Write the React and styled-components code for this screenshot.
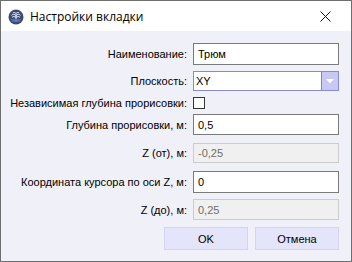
import React from 'react'
import styled, { createGlobalStyle } from 'styled-components'

const Global = createGlobalStyle`
  html, body { margin: 0; padding: 0; background: #ffffff; }
  * { box-sizing: border-box; }
`

const rows = [
  { label: 'Наименование:', kind: 'input', value: 'Трюм', h: 22 },
  { label: 'Плоскость:', kind: 'select', value: 'XY', h: 20 },
  { label: 'Независимая глубина прорисовки:', kind: 'check', h: 12 },
  { label: 'Глубина прорисовки, м:', kind: 'input', value: '0,5', h: 21 },
  { label: 'Z (от), м:', kind: 'disabled', value: '-0,25', h: 20 },
  { label: 'Координата курсора по оси Z, м:', kind: 'input', value: '0', h: 22 },
  { label: 'Z (до), м:', kind: 'disabled', value: '0,25', h: 21 },
]

function AppIcon() {
  return (
    <svg width="16" height="16" viewBox="0 0 16 16">
      <circle cx="8" cy="8" r="7.5" fill="#3b4a78" />
      <path d="M8 12.5V5.5M8 6.5C6.5 5 4.5 5 3.5 6.5M8 6.5C9.5 5 11.5 5 12.5 6.5M8 8.5C6.5 7.2 5 7.2 4 8.5M8 8.5C9.5 7.2 11 7.2 12 8.5M8 4.5C7 3.5 5.5 3.3 4.8 4M8 4.5C9 3.5 10.5 3.3 11.2 4" stroke="#ffffff" strokeWidth="0.9" fill="none" />
      <rect x="3" y="10" width="10" height="1.2" fill="#e23b3b" />
      <rect x="4" y="11.4" width="8" height="1.1" fill="#4a8ad8" />
    </svg>
  )
}

function Field({ row }) {
  if (row.kind === 'check') return <Check />
  if (row.kind === 'select') {
    return (
      <Select $h={row.h}>
        <SelectText>{row.value}</SelectText>
        <DropButton>
          <svg width="8" height="5" viewBox="0 0 8 5"><path d="M0 0H8L4 4.5Z" fill="#ffffff" /></svg>
        </DropButton>
      </Select>
    )
  }
  return (
    <TextBox $h={row.h} $disabled={row.kind === 'disabled'}>{row.value}</TextBox>
  )
}

export default function App() {
  return (
    <Window>
      <Global />
      <TitleBar>
        <AppIcon />
        <Title>Настройки вкладки</Title>
        <Close>
          <svg width="11" height="11" viewBox="0 0 11 11"><path d="M0.5 0.5L10.5 10.5M10.5 0.5L0.5 10.5" stroke="#111" strokeWidth="1" /></svg>
        </Close>
      </TitleBar>
      <Body>
        <Form>
          {rows.map((r) => (
            <React.Fragment key={r.label}>
              <Label $h={r.h}>{r.label}</Label>
              <Field row={r} />
            </React.Fragment>
          ))}
        </Form>
        <Buttons>
          <Button>OK</Button>
          <Button>Отмена</Button>
        </Buttons>
      </Body>
    </Window>
  )
}

const Window = styled.div`
  width: 352px;
  height: 262px;
  border: 1px solid #6f6f6f;
  display: flex;
  flex-direction: column;
  font-family: 'Liberation Sans', Arial, sans-serif;
  overflow: hidden;
`

const TitleBar = styled.div`
  height: 30px;
  background: #ffffff;
  display: flex;
  align-items: center;
  padding-left: 7px;
  padding-top: 1px;
`

const Title = styled.div`
  margin-left: 6px;
  font-family: 'Open Sans', 'Liberation Sans', sans-serif;
  font-size: 12px;
  color: #000;
`

const Close = styled.div`
  margin-left: auto;
  width: 46px;
  display: flex;
  justify-content: center;
  padding-right: 6px;
`

const Body = styled.div`
  flex: 1;
  background: #f0f0f8;
  padding: 12px 12px 0 7px;
`

const Form = styled.div`
  display: grid;
  grid-template-columns: 1fr 146px;
  grid-template-rows: 28px 26px 17px 29px 28px 28px 28px;
  column-gap: 6px;
`

const Label = styled.div`
  justify-self: end;
  align-self: start;
  height: ${(p) => p.$h}px;
  display: flex;
  align-items: center;
  font-size: 11px;
  color: #000;
  white-space: nowrap;
`

const TextBox = styled.div`
  height: ${(p) => p.$h}px;
  border: 1px solid ${(p) => (p.$disabled ? '#cccccc' : '#7a7a7a')};
  background: ${(p) => (p.$disabled ? '#f0f0f0' : '#ffffff')};
  color: ${(p) => (p.$disabled ? '#6d6d6d' : '#000000')};
  font-size: 11px;
  display: flex;
  align-items: center;
  padding-left: 4px;
`

const Select = styled.div`
  height: ${(p) => p.$h}px;
  border: 1px solid #8a8ad0;
  background: #ffffff;
  display: flex;
  align-items: stretch;
`

const SelectText = styled.div`
  flex: 1;
  font-size: 11px;
  display: flex;
  align-items: center;
  padding-left: 2px;
  border-right: 1px solid #8a8a8a;
`

const DropButton = styled.div`
  width: 16px;
  background: #c8c8f4;
  display: flex;
  align-items: center;
  justify-content: center;
`

const Check = styled.div`
  width: 12px;
  height: 12px;
  border: 1px solid #333333;
  background: #ffffff;
`

const Buttons = styled.div`
  display: flex;
  justify-content: flex-end;
  gap: 7px;
`

const Button = styled.div`
  width: 84px;
  height: 23px;
  background: #e4e4fa;
  border: 1px solid #d4d4f2;
  font-size: 11px;
  display: flex;
  align-items: center;
  justify-content: center;
`
